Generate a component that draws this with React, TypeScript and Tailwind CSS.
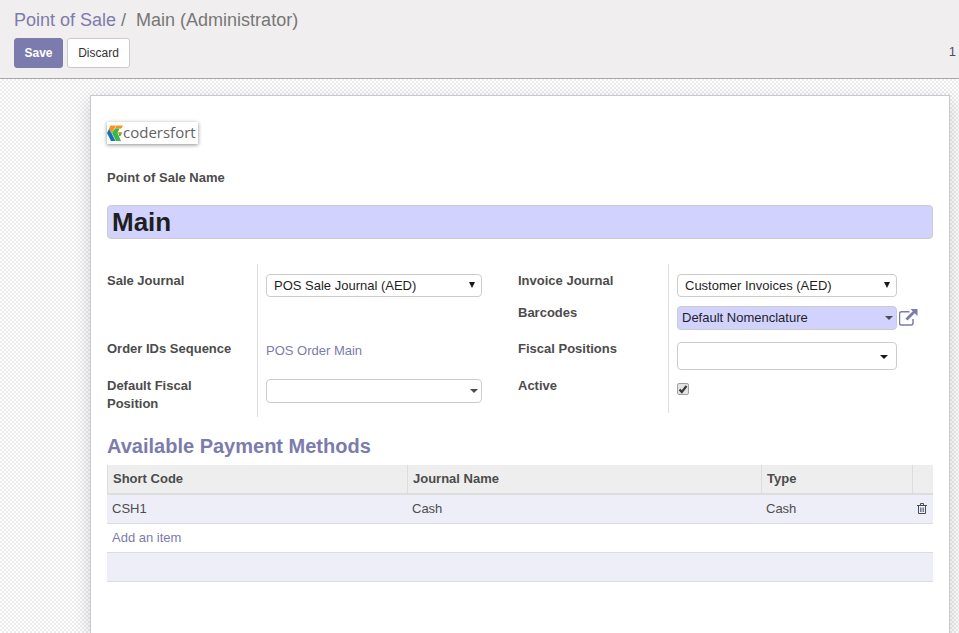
import type { ReactNode } from "react";

const rowBase = "flex text-[13px] leading-[18px]";

function Row({
  label,
  htmlFor,
  height,
  first = false,
  trailing,
  children,
}: {
  label: string;
  htmlFor?: string;
  height: string;
  first?: boolean;
  trailing?: ReactNode;
  children: ReactNode;
}) {
  const top = first ? "pt-2" : "";
  return (
    <div className={`${rowBase} ${height}`}>
      <div className={`w-[150px] shrink-0 pr-6 ${top}`}>
        <label htmlFor={htmlFor} className="font-bold">
          {label}
        </label>
      </div>
      <div className={`flex min-w-0 flex-1 items-start border-l border-[#ddd] pl-2 ${top}`}>
        <div className="flex min-w-0 flex-1 pt-[2px]">{children}</div>
        <div className="w-9 shrink-0 pl-[2px] pt-[5px]">{trailing}</div>
      </div>
    </div>
  );
}

function SelectBox({ id, value }: { id: string; value: string }) {
  return (
    <div className="relative flex-1">
      <select
        id={id}
        className="block h-[23px] w-full appearance-none rounded-[4px] border border-[#ccc] bg-white pl-[7px] text-[13px] leading-[18px] text-[#1f1f1f]"
      >
        <option>{value}</option>
      </select>
      <svg viewBox="0 0 6 6" className="pointer-events-none absolute right-[7px] top-2 size-[6px]" aria-hidden="true">
        <path d="M0 0h6L3 6z" fill="#1a1a1a" />
      </svg>
    </div>
  );
}

function Combo({
  id,
  value = "",
  box,
  caret,
}: {
  id: string;
  value?: string;
  box: string;
  caret: string;
}) {
  return (
    <div className="relative flex-1">
      <input
        id={id}
        type="text"
        defaultValue={value}
        className={`block w-full rounded-[4px] border border-[#ccc] px-1 pb-[2px] text-[13px] text-[#1f1f1f] ${box}`}
      />
      <svg viewBox="0 0 8 4" className={`pointer-events-none absolute h-1 w-2 ${caret}`} aria-hidden="true">
        <path d="M0 0h8L4 4z" fill="currentColor" />
      </svg>
    </div>
  );
}

function Logo() {
  return (
    <div className="flex h-[22px] w-[91px] items-start bg-white shadow-[0_1px_4px_rgba(0,0,0,0.45)]">
      <svg viewBox="0 0 16 16" className="mt-[3px] size-4 shrink-0" aria-hidden="true">
        <path d="M3.500 0.500H9L5 8 1.800 4z" fill="#f7941e" />
        <path d="M2 4 0 8 4 16H8.500L4.500 8z" fill="#1272b8" />
        <path d="M9.500 0.500H16L14.500 3.500H7.800z" fill="#f7941e" />
        <path d="M8 3.500H12.500L10.500 8 14 16H9L5 8z" fill="#3cb54a" />
        <path d="M11.500 7.500H15L13.500 11H12z" fill="#3cb54a" />
        <path d="M11.500 7H15L14.500 8.500H11z" fill="#f7941e" />
      </svg>
      <span className="font-['Open_Sans','Noto_Sans',sans-serif] text-[15px] leading-[20px] text-[#636363]">codersfort</span>
    </div>
  );
}

export default function App() {
  return (
    <div className="flex h-screen flex-col overflow-hidden bg-white font-['Liberation_Sans',Arial,sans-serif] text-[13px] leading-[18px] text-[#4c4c4c]">
      <header className="border-b border-[#a8a8a8] bg-[#f0eeee] pb-[10px] pl-[14px] pt-2">
        <nav className="text-[18px] leading-[24px] text-[#777]" aria-label="Breadcrumb">
          <a href="#pos" className="text-[#7c7bad]">
            Point of Sale
          </a>
          <span className="pl-[5px] pr-[10px]">/</span>
          <span>Main (Administrator)</span>
        </nav>
        <div className="mt-[6px] flex items-center gap-1 text-[12px]">
          <button type="button" className="h-[30px] w-[49px] rounded-[3px] border border-[#7c7bad] bg-[#7c7bad] font-bold text-white">
            Save
          </button>
          <button type="button" className="h-[30px] w-[63px] rounded-[3px] border border-[#ccc] bg-white text-[#333]">
            Discard
          </button>
          <span className="ml-auto pb-[2px] pr-[3px] text-[13px] text-[#4c4c6c]">1</span>
        </div>
      </header>

      <main className="flex flex-1 bg-[conic-gradient(#ebebeb_25%,#fff_0_50%,#ebebeb_0_75%,#fff_0)] bg-[length:4px_4px] pl-[90px] pr-[9px] pt-4">
        <section className="flex-1 border border-b-0 border-[#c8c8d3] bg-white px-4 pt-[26px] shadow-[0_5px_16px_rgba(0,0,0,0.16)]">
          <Logo />
          <label htmlFor="name" className="mt-[25px] block font-bold">
            Point of Sale Name
          </label>
          <input
            id="name"
            type="text"
            defaultValue="Main"
            className="mt-[18px] block h-[34px] w-full rounded-[4px] border border-[#ccc] bg-[#d2d2ff] px-1 text-[26px] font-bold text-[#1f1f1f]"
          />

          <div className="mt-[25px] grid grid-cols-[411fr_415fr] items-start">
            <div>
              <Row label="Sale Journal" htmlFor="sale" height="h-[76px]" first>
                <SelectBox id="sale" value="POS Sale Journal (AED)" />
              </Row>
              <Row label="Order IDs Sequence" height="h-[37px]">
                <a href="#sequence" className="text-[#7c7bad]">
                  POS Order Main
                </a>
              </Row>
              <Row label="Default Fiscal Position" htmlFor="fiscal" height="h-10">
                <Combo id="fiscal" box="h-6 bg-white" caret="right-1 top-[10px] text-[#4c4c4c]" />
              </Row>
            </div>
            <div>
              <Row label="Invoice Journal" htmlFor="invoice" height="h-10" first>
                <SelectBox id="invoice" value="Customer Invoices (AED)" />
              </Row>
              <Row
                label="Barcodes"
                htmlFor="barcodes"
                height="h-9"
                trailing={
                  <button type="button" aria-label="Open nomenclature" className="block text-[#7c7bad]">
                    <svg viewBox="0 0 19 17" className="h-[17px] w-[19px]" fill="none" aria-hidden="true">
                      <path d="M10.500 2.750H2.500A2 2 0 0 0 .5 4.750V14A2 2 0 0 0 2.500 16H12a2 2 0 0 0 2-2V10" stroke="currentColor" strokeWidth="1.500" />
                      <path d="M7.500 10.500 15 3" stroke="currentColor" strokeWidth="2.800" />
                      <path d="M11.500 0h7v7z" fill="currentColor" />
                    </svg>
                  </button>
                }
              >
                <Combo id="barcodes" value="Default Nomenclature" box="h-6 bg-[#d2d2ff]" caret="right-1 top-[10px] text-[#4c4c4c]" />
              </Row>
              <Row label="Fiscal Positions" htmlFor="positions" height="h-[37px]">
                <Combo id="positions" box="h-7 bg-white" caret="right-[9px] top-[13px] text-[#1a1a1a]" />
              </Row>
              <Row label="Active" htmlFor="active" height="h-9">
                <div className="relative mt-1 size-3">
                  <input
                    id="active"
                    type="checkbox"
                    defaultChecked
                    className="peer block size-3 appearance-none rounded-[2px] border border-[#a0a0a0] bg-[#e4e4e4]"
                  />
                  <svg viewBox="0 0 12 12" className="pointer-events-none absolute inset-0 hidden size-3 peer-checked:block" fill="none" aria-hidden="true">
                    <path d="M2.500 6.500 4.800 9 9.500 3" stroke="#3c3c3c" strokeWidth="2.200" />
                  </svg>
                </div>
              </Row>
            </div>
          </div>

          <h2 className="mt-[17px] text-[20px] font-bold leading-[24px] text-[#7c7bad]">Available Payment Methods</h2>

          <table className="mt-[7px] w-full table-fixed border-separate border-spacing-0 text-left">
            <colgroup>
              <col className="w-[300px]" />
              <col />
              <col className="w-[151px]" />
              <col className="w-[21px]" />
            </colgroup>
            <thead>
              <tr className="h-[30px] bg-[#eee] [&>th]:border-b-2 [&>th]:border-l [&>th]:border-[#ddd] [&>th]:pl-[5px]">
                <th>Short Code</th>
                <th>Journal Name</th>
                <th>Type</th>
                <th aria-label="Actions" />
              </tr>
            </thead>
            <tbody className="[&_td]:border-b [&_td]:border-[#ddd] [&_td]:pl-[5px] [&_tr]:h-[29px]">
              <tr className="bg-[#eeeef8]">
                <td>CSH1</td>
                <td>Cash</td>
                <td>Cash</td>
                <td>
                  <button type="button" aria-label="Delete" className="block pb-[2px]">
                    <svg viewBox="0 0 10 11" className="h-[11px] w-[10px]" fill="none" stroke="#4c4c4c" aria-hidden="true">
                      <path d="M0 2.500h10M3.500 2V.5h3V2M1.500 3v7.500h7V3" />
                      <path d="M3.500 4.500V9M5 4.500V9M6.500 4.500V9" stroke="#6c7c94" />
                    </svg>
                  </button>
                </td>
              </tr>
              <tr>
                <td colSpan={4}>
                  <a href="#add" className="text-[#7c7bad]">
                    Add an item
                  </a>
                </td>
              </tr>
              <tr className="bg-[#eeeef8]">
                <td colSpan={4} />
              </tr>
            </tbody>
          </table>
        </section>
      </main>
    </div>
  );
}
